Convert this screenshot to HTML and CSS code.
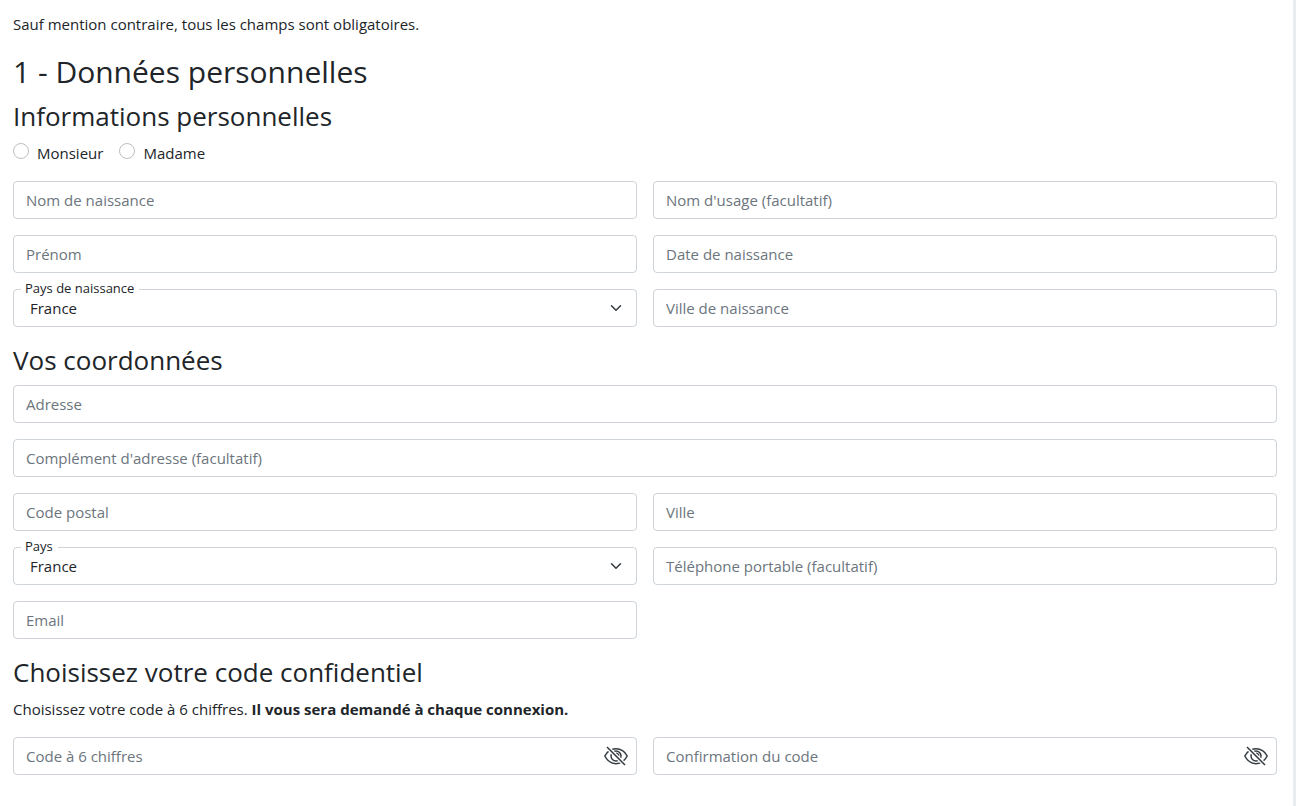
FILE: index.html
```html
<!DOCTYPE html>
<html lang="fr">
<head>
    <meta charset="UTF-8">
    <meta name="viewport" content="width=device-width, initial-scale=1.0">
    <title>Données personnelles</title>
    <link rel="stylesheet" href="styles.css">
</head>
<body>
    <form class="page">
        <p>Sauf mention contraire, tous les champs sont obligatoires.</p>
        <h2>1 - Données personnelles</h2>

        <h3>Informations personnelles</h3>
        <div class="radio-row">
            <label class="radio"><input type="radio" name="civilite" value="M">Monsieur</label>
            <label class="radio"><input type="radio" name="civilite" value="Mme">Madame</label>
        </div>
        <div class="grid">
            <input class="field" type="text" placeholder="Nom de naissance" aria-label="Nom de naissance">
            <input class="field" type="text" placeholder="Nom d'usage (facultatif)" aria-label="Nom d'usage">
            <input class="field" type="text" placeholder="Prénom" aria-label="Prénom">
            <input class="field" type="text" placeholder="Date de naissance" aria-label="Date de naissance">
            <div class="select-group">
                <label class="select-label" for="paysNaissance">Pays de naissance</label>
                <select class="field select" id="paysNaissance">
                    <option>France</option>
                </select>
                <svg class="chevron" viewBox="0 0 16 16" aria-hidden="true"><path d="m2 5 6 6 6-6"/></svg>
            </div>
            <input class="field" type="text" placeholder="Ville de naissance" aria-label="Ville de naissance">
        </div>

        <h3>Vos coordonnées</h3>
        <div class="grid">
            <input class="field full" type="text" placeholder="Adresse" aria-label="Adresse">
            <input class="field full" type="text" placeholder="Complément d'adresse (facultatif)" aria-label="Complément d'adresse">
            <input class="field" type="text" placeholder="Code postal" aria-label="Code postal">
            <input class="field" type="text" placeholder="Ville" aria-label="Ville">
            <div class="select-group">
                <label class="select-label" for="pays">Pays</label>
                <select class="field select" id="pays">
                    <option>France</option>
                </select>
                <svg class="chevron" viewBox="0 0 16 16" aria-hidden="true"><path d="m2 5 6 6 6-6"/></svg>
            </div>
            <input class="field" type="tel" placeholder="Téléphone portable (facultatif)" aria-label="Téléphone portable">
            <input class="field" type="email" placeholder="Email" aria-label="Email">
        </div>

        <h3>Choisissez votre code confidentiel</h3>
        <p>Choisissez votre code à 6 chiffres. <strong>Il vous sera demandé à chaque connexion.</strong></p>
        <div class="grid">
            <div class="field code">
                <input class="code-input" type="password" placeholder="Code à 6 chiffres" aria-label="Code à 6 chiffres">
                <button class="eye" type="button" aria-label="Afficher le code">
                    <svg viewBox="0 0 24 24" aria-hidden="true">
                        <path d="M.8 12C3.200 7.500 7.200 4.800 12 4.800S20.800 7.500 23.200 12C20.800 16.500 16.800 19.700 12 19.700S3.200 16.500.8 12z"/>
                        <circle cx="12" cy="12" r="5"/>
                        <path d="M12 9.300a2.700 2.700 0 0 1 2.700 2.700"/>
                        <path class="slash-gap" d="M4 4l16.500 16.500"/>
                        <path d="M3 3l18 18"/>
                    </svg>
                </button>
            </div>
            <div class="field code">
                <input class="code-input" type="password" placeholder="Confirmation du code" aria-label="Confirmation du code">
                <button class="eye" type="button" aria-label="Afficher le code">
                    <svg viewBox="0 0 24 24" aria-hidden="true">
                        <path d="M.8 12C3.200 7.500 7.200 4.800 12 4.800S20.800 7.500 23.200 12C20.800 16.500 16.800 19.700 12 19.700S3.200 16.500.8 12z"/>
                        <circle cx="12" cy="12" r="5"/>
                        <path d="M12 9.300a2.700 2.700 0 0 1 2.700 2.700"/>
                        <path class="slash-gap" d="M4 4l16.500 16.500"/>
                        <path d="M3 3l18 18"/>
                    </svg>
                </button>
            </div>
        </div>
    </form>
</body>
</html>
```
FILE: styles.css
```css
* {
    box-sizing: border-box;
}

body {
    margin: 0;
    min-height: 100vh;
    border-right: 3px solid #e9ecef;
    background-color: #fff;
    color: #212529;
    font-family: "Segoe UI", "Open Sans", "Noto Sans", sans-serif;
    font-size: 15px;
    line-height: 24px;
}

.page {
    padding: 12px 16px 16px 13px;
}

p {
    margin: 0 0 16px;
}

h2,
h3 {
    margin: 0 0 8px;
    font-weight: 400;
}

h2 {
    font-size: 30px;
    line-height: 39px;
}

h3 {
    font-size: 26px;
    line-height: 34px;
}

.radio-row {
    display: flex;
    gap: 16px;
    margin-bottom: 16px;
}

.radio {
    display: flex;
    align-items: flex-start;
    gap: 8px;
}

.radio input {
    appearance: none;
    width: 16px;
    height: 16px;
    margin: 2px 0 0;
    border: 1px solid #bfbfbf;
    border-radius: 50%;
    background-color: #fff;
}

.radio input:checked {
    border: 5px solid #0d6efd;
}

.grid {
    display: grid;
    grid-template-columns: 1fr 1fr;
    gap: 16px;
    margin-bottom: 16px;
}

.full {
    grid-column: 1 / -1;
}

.field {
    width: 100%;
    height: 38px;
    padding: 6px 12px;
    border: 1px solid #ced4da;
    border-radius: 4px;
    background-color: #fff;
    color: #212529;
    font: inherit;
}

.field::placeholder,
.code-input::placeholder {
    color: #6c757d;
    opacity: 1;
}

.select-group {
    position: relative;
}

.select {
    display: block;
    appearance: none;
    padding: 6px 36px 6px 16px;
}

.select-label {
    position: absolute;
    top: -10px;
    left: 8px;
    padding: 0 5px 0 4px;
    background-color: #fff;
    font-size: 13px;
    line-height: 18px;
}

.chevron {
    position: absolute;
    top: 13px;
    right: 15px;
    width: 12px;
    height: 12px;
    fill: none;
    stroke: #343a40;
    stroke-width: 2;
    stroke-linecap: round;
    stroke-linejoin: round;
    pointer-events: none;
}

.code {
    display: flex;
    align-items: center;
    padding: 0 8px 0 12px;
}

.code-input {
    flex: 1;
    min-width: 0;
    padding: 0;
    border: 0;
    outline: 0;
    background: none;
    color: inherit;
    font: inherit;
}

.eye {
    display: flex;
    padding: 0;
    border: 0;
    background: none;
    color: #343a40;
    cursor: pointer;
}

.eye svg {
    width: 24px;
    height: 24px;
    fill: none;
    stroke: currentColor;
    stroke-width: 1.5;
}

.eye .slash-gap {
    stroke: #fff;
    stroke-width: 4;
}
```
